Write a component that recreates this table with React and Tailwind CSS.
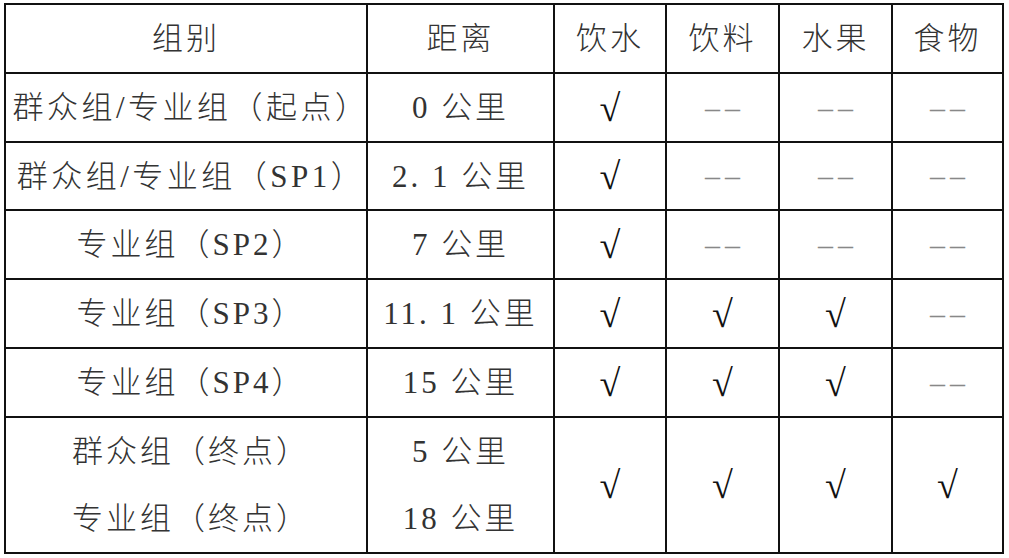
import React from "react";

const cols = ["w-[362px]", "w-[187px]", "w-[112px]", "w-[113px]", "w-[113px]", "w-[111px]"];
const rowH = ["h-[69px]", "h-[69px]", "h-[68px]", "h-[69px]", "h-[69px]", "h-[69px]"];

const Check = () => (
  <span className="text-[38px] leading-none text-[#111] font-normal tracking-normal" style={{ fontFamily: '"Liberation Serif",serif' }}>√</span>
);
const Dash = () => (
  <span className="text-[30px] leading-none text-[#888] tracking-[5px] pl-[5px]" style={{ fontFamily: '"Liberation Serif",serif' }}>––</span>
);

const rows = [
  ["群众组/专业组（起点）", "0 公里", 1, 0, 0, 0],
  ["群众组/专业组（SP1）", "2. 1 公里", 1, 0, 0, 0],
  ["专业组（SP2）", "7 公里", 1, 0, 0, 0],
  ["专业组（SP3）", "11. 1 公里", 1, 1, 1, 0],
  ["专业组（SP4）", "15 公里", 1, 1, 1, 0],
];

const Cell = ({ w, h, pad = "", children }) => (
  <div className={`${w} ${h} ${pad} shrink-0 whitespace-nowrap border-r-2 border-b-2 border-[#111] flex items-center justify-center`}>
    {children}
  </div>
);

export default function App() {
  const font = { fontFamily: '"Liberation Serif","Noto Sans CJK SC",serif' };
  return (
    <div className="w-[1009px] h-[558px] bg-white pl-[4px] pt-[3px]" style={font}>
      <div className="inline-flex flex-col border-t-2 border-l-2 border-[#111] text-[31px] leading-none text-[#333] font-light tracking-[3px]">
        <div className="flex">
          {["组别", "距离", "饮水", "饮料", "水果", "食物"].map((t, i) => (
            <Cell key={i} w={cols[i]} h="h-[69px]">{t}</Cell>
          ))}
        </div>
        {rows.map((r, ri) => (
          <div className="flex" key={ri}>
            <Cell w={cols[0]} h={rowH[ri + 1]} pad={ri < 2 ? "pl-[10px] tracking-[3.5px]" : "pl-[10px]"}>{r[0]}</Cell>
            <Cell w={cols[1]} h={rowH[ri + 1]}>{r[1]}</Cell>
            {r.slice(2).map((v, i) => (
              <Cell key={i} w={cols[i + 2]} h={rowH[ri + 1]}>{v ? <Check /> : <Dash />}</Cell>
            ))}
          </div>
        ))}
        <div className="flex">
          <div className={`${cols[0]} h-[136px] shrink-0 whitespace-nowrap border-r-2 border-b-2 border-[#111] flex flex-col pl-[10px]`}>
            <div className="h-[68px] flex items-center justify-center">群众组（终点）</div>
            <div className="h-[68px] flex items-center justify-center">专业组（终点）</div>
          </div>
          <div className={`${cols[1]} h-[136px] shrink-0 whitespace-nowrap border-r-2 border-b-2 border-[#111] flex flex-col`}>
            <div className="h-[68px] flex items-center justify-center">5 公里</div>
            <div className="h-[68px] flex items-center justify-center">18 公里</div>
          </div>
          {[2, 3, 4, 5].map((i) => (
            <Cell key={i} w={cols[i]} h="h-[136px]"><Check /></Cell>
          ))}
        </div>
      </div>
    </div>
  );
}
